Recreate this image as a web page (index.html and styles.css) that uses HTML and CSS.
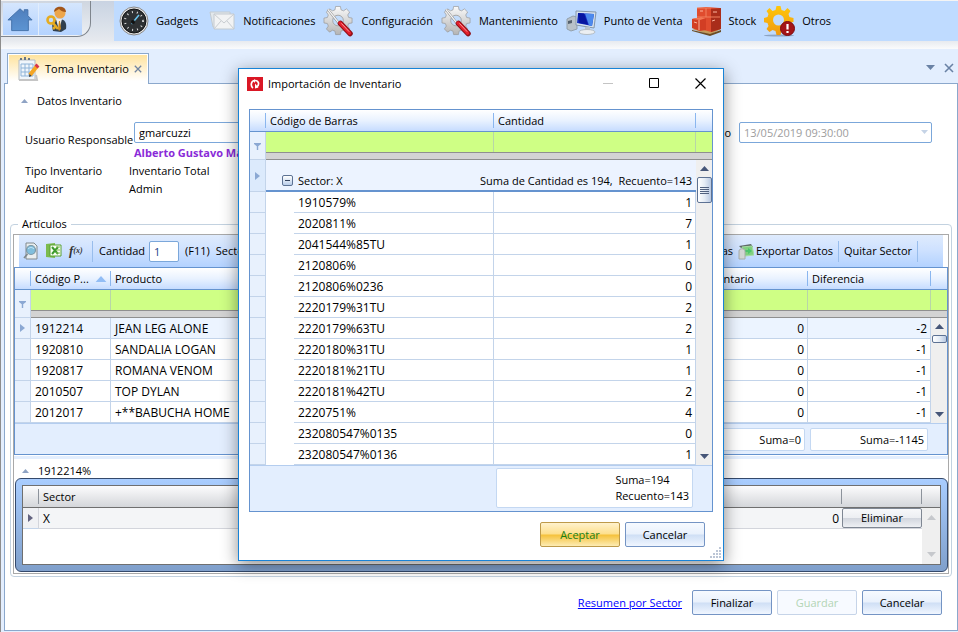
FILE: index.html
```html
<!DOCTYPE html>
<html lang="es">
<head>
<meta charset="utf-8">
<title>Toma Inventario</title>
<link rel="stylesheet" href="styles.css">
</head>
<body>
<svg class="defs" aria-hidden="true">
  <defs>
    <linearGradient id="metal" x1="0" y1="0" x2="0" y2="1"><stop offset="0" stop-color="#fafafa"/><stop offset="1" stop-color="#b4b4b4"/></linearGradient>
    <linearGradient id="gold" x1="0" y1="0" x2="0" y2="1"><stop offset="0" stop-color="#ffc60a"/><stop offset="1" stop-color="#f09a12"/></linearGradient>
    <linearGradient id="house" x1="0" y1="0" x2="0" y2="1"><stop offset="0" stop-color="#4f7fbd"/><stop offset="1" stop-color="#5c94d2"/></linearGradient>
    <symbol id="tools" viewBox="0 0 32 32">
      <path d="M13 1h5l.6 3.500 2.600 1 3-2 3.300 3.300-2 3 1 2.600 3.500.6v5l-3.500.6-1 2.600 2 3-3.300 3.300-3-2-2.600 1-.6 3.500h-5l-.6-3.500-2.600-1-3 2-3.300-3.300 2-3-1-2.600L1 18v-5l3.500-.6 1-2.600-2-3 3.300-3.300 3 2 2.600-1z" fill="url(#metal)" stroke="#969696" stroke-width=".7"/>
      <circle cx="15.500" cy="15.500" r="5.500" fill="#c3dcfb" stroke="#a5a5a5"/>
      <path d="M5 4l12 15" stroke="#8a8a8a" stroke-width="2.400"/><path d="M5 4l12 15" stroke="#f6f6f6" stroke-width="1.400"/>
      <path d="M18 18.500l10 10.500" stroke="#8f1018" stroke-width="5.500" stroke-linecap="round"/>
      <path d="M17.500 18l10 10.500" stroke="#e4202c" stroke-width="3.500" stroke-linecap="round"/>
      <path d="M19 18.500l8 8.500" stroke="#ff9d9d" stroke-width="1"/>
    </symbol>
    <symbol id="up" viewBox="0 0 9 5"><path d="M0 5L4.500 0 9 5z"/></symbol>
    <symbol id="down" viewBox="0 0 9 5"><path d="M0 0h9L4.500 5z"/></symbol>
    <symbol id="right" viewBox="0 0 5 8"><path d="M0 0l5 4-5 4z"/></symbol>
    <symbol id="funnel" viewBox="0 0 7 7"><path d="M0 0h7v1L4.200 3.200V7H2.800V3.200L0 1z"/></symbol>
    <symbol id="cross" viewBox="0 0 10 10"><path d="M1 1l8 8M9 1L1 9" fill="none" stroke="currentColor" stroke-width="1.600"/></symbol>
  </defs>
</svg>

<header class="app-header">
  <nav class="quick" aria-label="Acceso rápido">
    <div class="quick-inner">
      <button class="plain" aria-label="Inicio"><svg width="26" height="28" viewBox="0 0 28 28"><path d="M14 3L1 15h4v11.500h18V15h4l-4.500-4.500V4h-4v3z" fill="url(#house)" stroke="#426fa8"/></svg></button>
      <button class="plain user" aria-label="Usuario"><svg width="28" height="28" viewBox="0 0 28 28"><path d="M9 26c-2-8 0-12 6-12s8 4 7 10l-5 3z" fill="#31404f"/><path d="M12 14l3 11 3-11z" fill="#eee"/><path d="M15 16l-1 8 1 2 2-2-1-8z" fill="#d28b1b"/><circle cx="16" cy="8" r="5.500" fill="#eda64c"/><path d="M10 7c0-7 12-7 12 0-3 0-5-1-7-3z" fill="#a3561a"/><circle cx="7" cy="15" r="3.500" fill="none" stroke="#e5ac22" stroke-width="2.600"/><path d="M9 18l5 6M12 21l-3 3" stroke="#e5ac22" stroke-width="2.600"/></svg></button>
    </div>
  </nav>
  <nav class="menu" aria-label="Principal">
    <a href="#"><svg width="30" height="30" viewBox="0 0 30 30"><circle cx="15" cy="15" r="14" fill="#e3e3e3" stroke="#8a8a8a"/><circle cx="15" cy="15" r="12" fill="#2e3133" stroke="#111"/><circle cx="15" cy="15" r="9" fill="none" stroke="#ddd" stroke-width="2" stroke-dasharray="1 4"/><path d="M12.500 18L20 9" stroke="#6bc5ee" stroke-width="1.500"/><circle cx="14" cy="16" r="2" fill="#111"/></svg>Gadgets</a>
    <a href="#"><svg width="30" height="30" viewBox="0 0 30 30"><path d="M4 6h20v15H7z" fill="#e3e8ec" stroke="#c3cad0"/><path d="M8 8h20v15H8z" fill="#f2f3f4" stroke="#c3cad0"/><path d="M8 8l10 9 10-9M8 23l7-8M28 23l-7-8" fill="none" stroke="#c9cdd1"/></svg>Notificaciones</a>
    <a href="#"><svg width="31" height="32"><use href="#tools"/></svg>Configuración</a>
    <a href="#"><svg width="31" height="32"><use href="#tools"/></svg>Mantenimiento</a>
    <a href="#"><svg width="31" height="30" viewBox="0 0 31 30"><path d="M1 13l6-3 4 1v12l-6 2-4-2z" fill="#b9c2c9" stroke="#93a0ab"/><path d="M2 15l4-1v3l-4 1z" fill="#55616d"/><path d="M10 5l20 1-2 16-18-3z" fill="#d6e2ee" stroke="#8496aa"/><path d="M12 7l16 1-2 12-15-3z" fill="#1430c2"/><path d="M18 7.500l4 11-9-1.500-1-10z" fill="#0715a0"/><path d="M19 7.500l9 .5-2 12-3-.5z" fill="#4d8aed"/><path d="M19 21h5v4h-5z" fill="#b9c2c9"/><ellipse cx="21" cy="26" rx="8" ry="2.500" fill="#eceff2" stroke="#b4bdc5"/></svg>Punto de Venta</a>
    <a href="#"><svg width="31" height="30" viewBox="0 0 31 30"><path d="M1 23l9-3 20 3-11 6z" fill="#c39a5b"/><path d="M1 24l18 4 11-4v2l-11 4-18-5z" fill="#6b4c24"/><path d="M6 2l9-1 14 1v21l-9 3-14-4z" fill="#e04c2e"/><path d="M20 3l10-1v21l-10 3z" fill="#a92d1a"/><path d="M6 11h23M15 2v9M6 2h14" stroke="#f0805e"/><path d="M1 13l9-2 5 1v12l-6 1-8-3z" fill="#d23e24"/><path d="M1 13l9-2 5 1-6 2z" fill="#f37a58"/><path d="M8 14v10M3 16l3 1M21 15l3-1M9 5h3M22 6h4" stroke="#fbb59e"/></svg>Stock</a>
    <a href="#"><svg width="31" height="31" viewBox="0 0 31 31"><ellipse cx="15" cy="29.500" rx="15" ry="1" fill="#8da4c3"/><path d="M12.500 0h4l1 4 3 1 3-3 3 3-2 3 1 3 4 1v4l-4 1-1 3 2 3-3 3-3-2-3 1-1 4h-4l-1-4-3-1-3 2-3-3 2-3-1-3-4-1v-4l4-1 1-3-2-3 3-3 3 3 3-1z" fill="url(#gold)"/><circle cx="14.500" cy="14" r="5.500" fill="#bfdbff"/><circle cx="23.500" cy="22.500" r="7" fill="#a41418" stroke="#7b0b10"/><path d="M23.500 18v5.500M23.500 25v2" stroke="#fff" stroke-width="2.200"/></svg>Otros</a>
  </nav>
</header>

<div class="tabs">
  <div class="tab">
    <svg width="22" height="26" viewBox="0 0 22 26"><path d="M1 4h16v20H1z" fill="#f0f6fb" stroke="#b3bcc5"/><path d="M3 4V2M7 4V1M11 4V2" stroke="#687785" stroke-width="2"/><path d="M3 8h12v12H3zM3 12h12M3 16h12M7 8v12M11 8v12" fill="none" stroke="#8fb4d8"/><path d="M1 24h18l-1-5" fill="none" stroke="#c5c5c5" stroke-width="2"/><path d="M12 19l7-9" stroke="#f5a623" stroke-width="4"/><path d="M18 11l2-2" stroke="#d8344a" stroke-width="4"/><path d="M11 21l.5-3 2 2z" fill="#333"/></svg>
    <span>Toma Inventario</span>
    <button class="plain tab-close" aria-label="Cerrar pestaña"><svg width="8" height="8"><use href="#cross"/></svg></button>
  </div>
  <div class="tab-tools">
    <button class="plain" aria-label="Lista"><svg width="9" height="5"><use href="#down"/></svg></button>
    <button class="plain" aria-label="Cerrar"><svg width="10" height="10"><use href="#cross"/></svg></button>
  </div>
</div>

<main class="panel">
  <h2 class="expander first"><svg width="7" height="4"><use href="#up"/></svg>Datos Inventario</h2>
  <div class="form">
    <div class="fields">
      <label class="resp" for="resp">Usuario Responsable</label>
      <div class="resp-value"><input id="resp" type="text" value="gmarcuzzi"><strong>Alberto Gustavo Marcuzzi</strong></div>
      <span>Tipo Inventario</span><span>Inventario Total</span>
      <span>Auditor</span><span>Admin</span>
    </div>
    <div class="date">
      <label for="fecha">Inicio</label>
      <div class="combo"><select id="fecha" disabled><option>13/05/2019 09:30:00</option></select><svg width="7" height="4"><use href="#down"/></svg></div>
    </div>
  </div>

  <fieldset class="group">
    <legend>Artículos</legend>
    <div class="frame">
      <div class="toolbar">
        <button class="plain" aria-label="Vista previa"><svg width="16" height="18" viewBox="0 0 16 18"><path d="M3 1h8l3 3v13H3z" fill="#e9eef0" stroke="#81898d"/><circle cx="8" cy="8" r="4.500" fill="#80bedd" stroke="#7d97a5" stroke-width="1.200"/><path d="M5 7c2-2 4-2 6 0" stroke="#cdeafa" fill="none"/><path d="M4.500 12L1 16" stroke="#7f878b" stroke-width="1.600"/></svg></button>
        <button class="plain" aria-label="Excel"><svg width="16" height="18" viewBox="0 0 16 18"><path d="M0 2l9-1v15l-9-1z" fill="#7cbb4e"/><path d="M4 3h11v11H4z" fill="#fafff5" stroke="#58a035"/><path d="M6 5l6 7M12 5l-6 7" stroke="#3c9a2e" stroke-width="2"/><path d="M10 5h4M10 8h4M10 11h4" stroke="#7cbb4e"/></svg></button>
        <button class="plain fx" aria-label="Función"><i>f</i><small>(x)</small></button>
        <span class="sep"></span>
        <label for="cant">Cantidad</label>
        <input id="cant" type="text" value="1">
        <span>(F11)</span>
        <span>Sector</span>
        <div class="tools-right">
          <button class="plain">Notas</button>
          <button class="plain"><svg width="16" height="17" viewBox="0 0 16 17"><path d="M1 3l12-2 2 3-12 1z" fill="#5e6a66"/><path d="M4 4l10-1 2 9-9 1z" fill="#7fd07e" stroke="#a6dba3"/><path d="M10 5l4 3-4 3V9H6V7h4z" fill="#4cc56c"/><path d="M1 8c0-3 6-3 6 0v8H1z" fill="#d3d6d4" stroke="#a6aca8"/></svg>Exportar Datos</button>
          <span class="sep"></span>
          <button class="plain">Quitar Sector</button>
          <span class="sep"></span>
        </div>
      </div>

      <table class="grid articles">
        <colgroup><col class="c-ind"><col class="c-code"><col><col class="c-inv"><col class="c-dif"><col class="c-scroll"></colgroup>
        <thead>
          <tr class="head"><th></th><th>Código P...<svg class="sort" width="12" height="6"><use href="#up"/></svg></th><th>Producto</th><th>Inventario</th><th>Diferencia</th><th></th></tr>
          <tr class="filter"><td class="ind" rowspan="2"><svg width="7" height="7"><use href="#funnel"/></svg></td><td></td><td></td><td></td><td></td><td></td></tr>
          <tr class="split"><td colspan="5"></td></tr>
        </thead>
        <tbody>
          <tr class="current"><td class="ind"><svg width="5" height="8"><use href="#right"/></svg></td><td>1912214</td><td>JEAN LEG ALONE</td><td class="num">0</td><td class="num">-2</td>
            <td class="scroll" rowspan="5"><div class="bar"><svg width="9" height="5"><use href="#up"/></svg><span class="thumb small"></span><svg class="end" width="9" height="5"><use href="#down"/></svg></div></td></tr>
          <tr><td class="ind"></td><td>1920810</td><td>SANDALIA LOGAN</td><td class="num">0</td><td class="num">-1</td></tr>
          <tr><td class="ind"></td><td>1920817</td><td>ROMANA VENOM</td><td class="num">0</td><td class="num">-1</td></tr>
          <tr><td class="ind"></td><td>2010507</td><td>TOP DYLAN</td><td class="num">0</td><td class="num">-1</td></tr>
          <tr><td class="ind"></td><td>2012017</td><td>+**BABUCHA HOME</td><td class="num">0</td><td class="num">-1</td></tr>
        </tbody>
        <tfoot><tr><td colspan="3"></td><td><div class="sum">Suma=0</div></td><td><div class="sum">Suma=-1145</div></td><td></td></tr></tfoot>
      </table>
      <div class="splitter"></div>

      <h2 class="expander second"><svg width="7" height="4"><use href="#up"/></svg>1912214%</h2>
      <div class="detail">
        <table class="grid sectors">
          <colgroup><col class="c-ind"><col><col class="c-qty"><col class="c-del"><col class="c-scroll"></colgroup>
          <thead><tr class="head"><th></th><th>Sector</th><th></th><th></th><th></th></tr></thead>
          <tbody>
            <tr class="current"><td class="ind"><svg width="5" height="8"><use href="#right"/></svg></td><td>X</td><td class="num">0</td><td class="del"><button>Eliminar</button></td>
              <td class="scroll" rowspan="2"><div class="bar"><svg width="9" height="5"><use href="#up"/></svg><svg class="end" width="9" height="5"><use href="#down"/></svg></div></td></tr>
            <tr class="blank"><td colspan="4"></td></tr>
          </tbody>
        </table>
      </div>
    </div>
  </fieldset>

  <div class="actions">
    <a href="#">Resumen por Sector</a>
    <button class="btn">Finalizar</button>
    <button class="btn" disabled>Guardar</button>
    <button class="btn">Cancelar</button>
  </div>
</main>

<div class="dialog" role="dialog" aria-labelledby="dlg-title">
  <div class="titlebar">
    <svg width="16" height="14" viewBox="0 0 16 14"><path d="M0 0h16v14H0z" fill="#da1725"/><path d="M6 11C3.500 9.500 3.500 3.500 8 3.500c4 0 4.500 4 2 6.500" fill="none" stroke="#fff" stroke-width="1.700"/><path d="M8 6.500v5l3.500-1z" fill="#fff"/><path d="M8 2v4L6 4z" fill="#fff"/></svg>
    <h1 id="dlg-title">Importación de Inventario</h1>
    <div class="window-buttons">
      <button class="plain" aria-label="Minimizar" disabled><svg width="11" height="11"><path d="M0 5.500h10" stroke="#c4c4c4"/></svg></button>
      <button class="plain" aria-label="Maximizar"><svg width="11" height="11"><path d="M.5.500h9v9h-9z" fill="none" stroke="#000"/></svg></button>
      <button class="plain" aria-label="Cerrar"><svg width="11" height="11"><path d="M.5.500l10 10M10.500.500l-10 10" stroke="#000" stroke-width="1.200"/></svg></button>
    </div>
  </div>
  <table class="grid import">
    <colgroup><col class="c-ind"><col class="c-indent"><col><col class="c-cant"><col class="c-scroll"></colgroup>
    <thead>
      <tr class="head"><th></th><th colspan="2">Código de Barras</th><th>Cantidad</th><th></th></tr>
      <tr class="filter"><td class="ind" rowspan="2"><svg width="7" height="7"><use href="#funnel"/></svg></td><td colspan="2"></td><td></td><td></td></tr>
      <tr class="split"><td colspan="4"></td></tr>
    </thead>
    <tbody>
      <tr class="sector"><td class="ind"><svg width="5" height="8"><use href="#right"/></svg></td>
        <td colspan="3"><div class="sector-row"><button class="toggle" aria-label="Contraer"></button><span>Sector: X</span><span class="sector-sum">Suma de Cantidad es 194, &nbsp;Recuento=143</span></div></td>
        <td class="scroll" rowspan="14"><div class="bar"><svg width="9" height="5"><use href="#up"/></svg><span class="thumb"><i></i><i></i><i></i><i></i></span><svg class="end" width="9" height="5"><use href="#down"/></svg></div></td></tr>
      <tr><td class="ind"></td><td class="indent"></td><td>1910579%</td><td class="num">1</td></tr>
      <tr><td class="ind"></td><td class="indent"></td><td>2020811%</td><td class="num">7</td></tr>
      <tr><td class="ind"></td><td class="indent"></td><td>2041544%85TU</td><td class="num">1</td></tr>
      <tr><td class="ind"></td><td class="indent"></td><td>2120806%</td><td class="num">0</td></tr>
      <tr><td class="ind"></td><td class="indent"></td><td>2120806%0236</td><td class="num">0</td></tr>
      <tr><td class="ind"></td><td class="indent"></td><td>2220179%31TU</td><td class="num">2</td></tr>
      <tr><td class="ind"></td><td class="indent"></td><td>2220179%63TU</td><td class="num">2</td></tr>
      <tr><td class="ind"></td><td class="indent"></td><td>2220180%31TU</td><td class="num">1</td></tr>
      <tr><td class="ind"></td><td class="indent"></td><td>2220181%21TU</td><td class="num">1</td></tr>
      <tr><td class="ind"></td><td class="indent"></td><td>2220181%42TU</td><td class="num">2</td></tr>
      <tr><td class="ind"></td><td class="indent"></td><td>2220751%</td><td class="num">4</td></tr>
      <tr><td class="ind"></td><td class="indent"></td><td>232080547%0135</td><td class="num">0</td></tr>
      <tr><td class="ind"></td><td class="indent"></td><td>232080547%0136</td><td class="num">1</td></tr>
    </tbody>
    <tfoot><tr><td colspan="3"></td><td><div class="sum two"><span>Suma=194<br>Recuento=143</span></div></td><td></td></tr></tfoot>
  </table>
  <div class="dialog-actions">
    <button class="btn primary">Aceptar</button>
    <button class="btn">Cancelar</button>
  </div>
  <svg class="grip" width="11" height="11" viewBox="0 0 11 11"><path d="M9 0h2v2H9zM9 3h2v2H9zM6 3h2v2H6zM9 6h2v2H9zM6 6h2v2H6zM3 6h2v2H3zM9 9h2v2H9zM6 9h2v2H6zM3 9h2v2H3zM0 9h2v2H0z" fill="#bcc6d6"/></svg>
</div>
</body>
</html>
```
FILE: styles.css
```css
* { box-sizing: border-box; }

body {
  margin: 0;
  min-height: 100vh;
  display: flex;
  flex-direction: column;
  background: #e3eefe;
  border-left: 1px solid #8d8d8d;
  color: #000;
  font: 11px/16px "Open Sans", "Noto Sans", sans-serif;
  overflow: hidden;
}

button, input, select { font: inherit; color: inherit; }
h1, h2 { margin: 0; font-size: inherit; font-weight: normal; }
svg { flex: none; fill: currentColor; }
.defs { position: absolute; width: 0; height: 0; }

.plain {
  display: inline-flex;
  align-items: center;
  gap: 2px;
  padding: 0;
  border: 0;
  background: none;
}

/* Header */
.app-header {
  display: flex;
  align-items: flex-start;
  height: 49px;
  border-top: 1px solid #f4f4f4;
  background: linear-gradient(#c9d3e2, #dde3eb 60%, #e6e9ee 82%, #fafbfc);
}
.quick {
  width: 90px;
  height: 36px;
  padding: 2px 8px 1px 2px;
  border: solid #7f858d;
  border-width: 0 1px 1px 0;
  border-radius: 0 0 14px 0;
  background: linear-gradient(#cfd6e0, #edf0f4);
}
.quick-inner {
  display: flex;
  height: 32px;
  padding-left: 4px;
  background: linear-gradient(#d5e6fd, #b4d3ff);
}
.user { margin-left: 5px; padding-left: 5px; border-left: 1px solid #e1edfc; }
.menu {
  display: flex;
  align-items: center;
  gap: 8px;
  flex: 1;
  height: 40px;
  margin-left: 23px;
  padding-left: 5px;
  background: #bfdbff;
}
.menu a {
  display: flex;
  align-items: center;
  gap: 7px;
  color: inherit;
  text-decoration: none;
  white-space: nowrap;
}

/* Tabs */
.tabs {
  display: flex;
  align-items: flex-end;
  justify-content: space-between;
  height: 34px;
  padding: 0 4px 0 6px;
}
.tab {
  display: flex;
  align-items: center;
  gap: 5px;
  height: 31px;
  margin-bottom: -1px;
  padding: 0 6px 0 10px;
  position: relative;
  border: 1px solid #8ba8cc;
  border-bottom: 0;
  box-shadow: inset 0 0 0 1px #fff;
  background: linear-gradient(#ffe29a, #fff 90%);
}
.tab-close { color: #7184a0; }
.tab-tools { display: flex; gap: 9px; height: 31px; color: #6a82a5; }

/* Main panel */
.panel {
  flex: 1;
  margin: 0 0 1px 3px;
  border: 1px solid #8ba8cc;
  background: #fff;
}
.expander { display: flex; align-items: center; gap: 9px; }
.expander svg { color: #8fa3c4; }
.first { height: 34px; padding-left: 16px; }
.second { height: 19px; padding: 4px 0 0 8px; }

.form {
  display: flex;
  align-items: flex-start;
  justify-content: space-between;
  padding: 4px 25px 18px 20px;
}
.fields {
  display: grid;
  grid-template-columns: 104px 300px;
  grid-template-rows: 40px 18px 18px;
  align-items: center;
  white-space: nowrap;
}
.resp { padding-bottom: 4px; }
.resp-value { display: grid; padding-left: 5px; }
.resp-value strong { line-height: 19px; color: #8a2bd8; }
input, select {
  height: 21px;
  border: 1px solid #7ba7da;
  border-radius: 2px;
  background: #fff;
  padding: 0 4px;
}
.date { display: flex; align-items: center; gap: 8px; }
.combo { position: relative; width: 193px; }
.combo select { width: 100%; appearance: none; color: #9d9d9d; opacity: 1; }
.combo svg { position: absolute; right: 4px; top: 8px; color: #c5d3e6; }

/* Group */
.group {
  min-width: 0;
  margin: 0 5px;
  padding: 2px;
  border: 1px solid #c3d2e0;
  border-radius: 4px;
}
.group legend { margin-left: 5px; padding: 0 4px; }
.frame { border: 1px solid #a9a9a9; }
.toolbar {
  display: flex;
  align-items: center;
  gap: 6px;
  height: 32px;
  margin: 0 5px;
  padding: 0 25px 0 4px;
  background: linear-gradient(#dfebfd, #cfe2ff 45%, #b3d2ff);
  white-space: nowrap;
}
.toolbar .plain { min-width: 17px; }
.toolbar input { width: 30px; color: #1c3f86; }
.toolbar label { margin-right: -2px; }
.fx { gap: 0; font: italic bold 13px/16px "Liberation Serif", serif; color: #333; }
.fx small { font-size: 8px; }
.sep { width: 1px; height: 21px; background: #98bdec; }
.tools-right { display: flex; align-items: center; gap: 5px; margin-left: auto; }

/* Grids */
.grid {
  width: 100%;
  table-layout: fixed;
  border-collapse: separate;
  border-spacing: 0;
  border: 1px solid #6593cf;
  background: #fff;
}
.grid th, .grid td { padding: 0 4px; height: 21px; text-align: left; font-weight: normal; white-space: nowrap; }
.c-ind { width: 16px; }
.c-code { width: 80px; }
.c-inv { width: 110px; }
.c-dif { width: 123px; }
.c-scroll { width: 16px; }
.c-qty { width: 110px; }
.c-del { width: 80px; }
.sectors .c-scroll { width: 18px; }
.c-indent { width: 28px; }
.c-cant { width: 202px; }

.grid .head th {
  height: 22px;
  border-bottom: 1px solid #6593cf;
  background:
    linear-gradient(#8ab6ef, #8ab6ef) right center / 1px 15px no-repeat,
    linear-gradient(#fff, #e9f2ff 50%, #c6dcff);
}
.grid .head th:last-child { background: linear-gradient(#fff, #e9f2ff 50%, #c6dcff); }
.grid .sort { float: right; margin-top: 5px; color: #92bdf5; }
.grid .filter td { height: 20px; background: #cfff85; border-right: 1px solid #b8d6a8; }
.grid .filter td:last-child { border-right: 0; }
.grid .split td { height: 8px; background: #d3d3d3; border: solid #8f8f8f; border-width: 1px 0; }
.grid tbody td {
  padding-top: 1px;
  border-right: 1px solid #c3d4ea;
  border-bottom: 1px solid #c3d4ea;
  font-size: 12px;
}
.grid tbody td.num { text-align: right; padding-right: 3px; }
.grid .current td { background: #ecf4ff; }
.grid thead td.ind, .grid tbody td.ind {
  padding: 0;
  border-right: 1px solid #c3d4ea;
  border-bottom: 1px solid #c3d4ea;
  background: #e8f1fd;
  color: #8ba8d3;
  text-align: center;
  line-height: 8px;
}
.grid tbody td.indent { border: 0; }
.grid tbody td.scroll { padding: 0; height: 1px; border: 0; background: #efefef; }
.bar {
  display: flex;
  flex-direction: column;
  align-items: center;
  gap: 6px;
  height: 100%;
  padding: 6px 0;
  color: #465678;
}
.bar .end { margin-top: auto; }
.thumb {
  display: flex;
  flex-direction: column;
  align-items: center;
  justify-content: center;
  gap: 1px;
  width: 15px;
  height: 26px;
  border: 1px solid #5d7294;
  border-radius: 2px;
  background: linear-gradient(90deg, #fff, #e5ecf5 50%, #b9c9e2);
}
.thumb.small { height: 8px; }
.thumb i { width: 9px; height: 1px; background: #51617f; }

.grid tfoot td {
  height: 31px;
  padding: 4px 2px 3px;
  border-top: 1px solid #b4cdef;
  background: #e3eefe;
}
.sum {
  height: 23px;
  margin-right: 1px;
  padding: 3px 3px 0;
  border: 1px solid #c4d8f2;
  border-radius: 2px;
  background: #fff;
  text-align: right;
}
.sum.two { display: flex; justify-content: flex-end; height: 40px; text-align: left; }

.splitter { height: 4px; border-top: 1px solid #fff; background: #e3eefe; }

/* Sector detail */
.detail {
  margin: 0 0 1px 1px;
  padding: 6px;
  border: 1px solid #34496b;
  border-radius: 6px;
  background: linear-gradient(#a9cdff, #7f9fcb);
}
.detail .grid { border-color: #6f6f6f; }
.sectors .head th {
  border-bottom-color: #6f6f6f;
  background:
    linear-gradient(#8d939c, #8d939c) right center / 1px 15px no-repeat,
    linear-gradient(#fcfcfd, #d4d6da);
}
.sectors .head th:last-child { background: linear-gradient(#fcfcfd, #d4d6da); }
.sectors .head th:nth-child(2) { background: linear-gradient(#fcfcfd, #d4d6da); }
.sectors .current td { background: #f4f5f7; border-right: 0; border-color: #d3d5dc; }
.sectors .current td.ind { border-right: 1px solid #d3d5dc; background: #f0f1f4; color: #636380; }
.sectors tbody td.del { padding: 0; }
.sectors .blank td { height: 35px; border: 0; }
.sectors .bar { color: #c6c8cc; padding: 7px 0; }
.del button {
  display: block;
  width: 100%;
  height: 20px;
  padding: 0;
  border: 1px solid #7f8793;
  border-radius: 2px;
  background: linear-gradient(#f7f8fa, #eceef2 50%, #d2d6de 52%, #eef0f4);
  font-size: 11px;
}

/* Buttons */
.btn {
  width: 80px;
  height: 25px;
  padding: 0;
  border: 1px solid #7494c4;
  border-radius: 2px;
  background: linear-gradient(#f6faff, #e9f1fc 48%, #cfdff5 52%, #f0f6ff);
}
.btn:disabled { border-color: #c6d4e8; background: #f7faff; color: #b3d5b5; }
.primary {
  border-color: #bd9a4a;
  background: linear-gradient(#fff2cd, #fddf8c 48%, #f5c13a 52%, #fdecb4);
  color: #168016;
}
.actions {
  display: flex;
  align-items: center;
  justify-content: flex-end;
  gap: 5px;
  padding: 13px 15px 14px;
}
.actions a { margin-right: 5px; color: #00f; text-decoration: underline; }

/* Import dialog */
.dialog {
  position: absolute;
  left: 237px;
  top: 68px;
  width: 486px;
  margin-left: 1px;
  padding: 0 10px;
  border: 1px solid #1883d7;
  background: #fff;
  box-shadow: 0 4px 16px rgba(0, 0, 0, .45);
}
.titlebar { display: flex; align-items: center; gap: 5px; height: 29px; margin-left: -2px; }
.window-buttons { display: flex; gap: 35px; margin-left: auto; padding-right: 7px; }
.titlebar + .grid { margin-top: 11px; }
.grid .sector td { height: 32px; border-bottom: 2px solid #6593cf; border-right: 0; background: #ecf3ff; }
.grid .sector td.ind { border-right: 1px solid #c3d4ea; border-bottom: 1px solid #c3d4ea; background: #dceafc; }
.sector-row { display: flex; align-items: center; gap: 5px; padding: 10px 0 0 12px; font-size: 11px; }
.sector-sum { margin-left: auto; }
.toggle {
  width: 11px;
  height: 11px;
  padding: 0;
  border: 1px solid #5d7294;
  border-radius: 2px;
  background: linear-gradient(#33415c, #33415c) center / 5px 1px no-repeat, linear-gradient(#fff, #b9cde9);
}
.import tfoot td { height: 46px; padding: 2px 2px 3px; }
.dialog-actions { display: flex; justify-content: flex-end; gap: 5px; padding: 10px 8px 13px; }
.grip { position: absolute; right: 2px; bottom: 2px; }
```
